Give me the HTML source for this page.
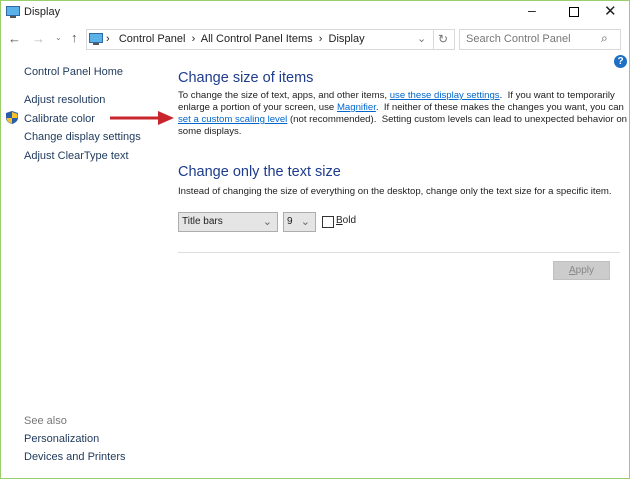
<!DOCTYPE html><html><head><style>
body{margin:0;width:630px;height:479px;overflow:hidden;background:#fff;font-family:"Liberation Sans",sans-serif;font-size:11px;color:#1e1e1e;position:relative}
.win{position:absolute;left:0;top:0;width:628px;height:477px;border:1px solid #9acd6c}
.a{position:absolute;white-space:nowrap}
.l{color:#0066cc;text-decoration:underline}
.side{color:#1e395b}
</style></head><body><div class="win"></div>
<svg class="a" style="left:6px;top:6px" width="14" height="12"><rect x="0.5" y="0.5" width="13" height="9" fill="#5bb2e8" stroke="#2d6aa3"/><rect x="4" y="10" width="6" height="2" fill="#555"/></svg>
<div class="a" style="left:24px;top:6px;font-size:11px">Display</div>
<div class="a" style="left:528px;top:2px;font-size:14px">–</div>
<div class="a" style="left:569px;top:7px;width:8px;height:8px;border:1px solid #000"></div>
<div class="a" style="left:604px;top:2px;font-size:15px">✕</div>
<div class="a" style="left:8px;top:31px;font-size:13px;color:#555">←</div>
<div class="a" style="left:32px;top:31px;font-size:13px;color:#bbb">→</div>
<div class="a" style="left:55px;top:33px;font-size:8px;color:#777">⌄</div>
<div class="a" style="left:71px;top:30px;font-size:13px;color:#555">↑</div>
<div class="a" style="left:86px;top:29px;width:367px;height:19px;border:1px solid #d9d9d9"></div>
<svg class="a" style="left:89px;top:33px" width="14" height="12"><rect x="0.5" y="0.5" width="13" height="9" fill="#5bb2e8" stroke="#2d6aa3"/><rect x="4" y="10" width="6" height="2" fill="#555"/></svg>
<div class="a" style="left:106px;top:33px">›&nbsp;&nbsp; Control Panel &nbsp;›&nbsp; All Control Panel Items &nbsp;›&nbsp; Display</div>
<div class="a" style="left:417px;top:32px;color:#777">⌄</div>
<div class="a" style="left:433px;top:30px;width:1px;height:19px;background:#d9d9d9"></div>
<div class="a" style="left:438px;top:32px;color:#777;font-size:12px">↻</div>
<div class="a" style="left:459px;top:29px;width:160px;height:19px;border:1px solid #d9d9d9"></div>
<div class="a" style="left:466px;top:33px;color:#777">Search Control Panel</div>
<div class="a" style="left:601px;top:31px;color:#555;font-size:12px">⌕</div>
<div class="a" style="left:614px;top:55px;width:13px;height:13px;border-radius:50%;background:#1c6fc4;color:#fff;font-weight:bold;font-size:10px;text-align:center;line-height:13px">?</div>
<div class="a side" style="left:24px;top:66px">Control Panel Home</div>
<div class="a side" style="left:24px;top:94px">Adjust resolution</div>
<svg class="a" style="left:6px;top:111px" width="12" height="13"><path d="M6 0L12 2V7C12 10 9 12 6 13C3 12 0 10 0 7V2Z" fill="#2a5ea8"/><path d="M6 1V7H11.5V3L6 1ZM0.6 7H6V12.5C3 11.5 0.6 10 0.6 7Z" fill="#f5c131"/></svg>
<div class="a side" style="left:24px;top:113px">Calibrate color</div>
<div class="a side" style="left:24px;top:131px">Change display settings</div>
<div class="a side" style="left:24px;top:150px">Adjust ClearType text</div>
<svg class="a" style="left:108px;top:111px" width="66" height="14"><rect x="2" y="5.5" width="52" height="3" fill="#c8262c"/><path d="M50 0L66 7L50 14Z" fill="#c8262c"/></svg>
<div class="a" style="left:24px;top:415px;color:#777">See also</div>
<div class="a side" style="left:24px;top:433px">Personalization</div>
<div class="a side" style="left:24px;top:451px">Devices and Printers</div>
<div class="a" style="left:178px;top:70px;font-size:14.5px;color:#1e3c8c">Change size of items</div>
<div class="a" style="left:178px;top:90px;line-height:12px;font-size:9.6px">To change the size of text, apps, and other items, <span class="l">use these display settings</span>.&nbsp; If you want to temporarily<br>enlarge a portion of your screen, use <span class="l">Magnifier</span>.&nbsp; If neither of these makes the changes you want, you can<br><span class="l">set a custom scaling level</span> (not recommended).&nbsp; Setting custom levels can lead to unexpected behavior on<br>some displays.</div>
<div class="a" style="left:178px;top:164px;font-size:14.5px;color:#1e3c8c">Change only the text size</div>
<div class="a" style="left:178px;top:186px;font-size:9.6px">Instead of changing the size of everything on the desktop, change only the text size for a specific item.</div>
<div class="a" style="left:178px;top:212px;width:98px;height:18px;background:#e5e5e5;border:1px solid #adadad"><span style="position:absolute;left:3px;top:3px;font-size:10px">Title bars</span><span style="position:absolute;right:5px;top:2px;color:#666">⌄</span></div>
<div class="a" style="left:283px;top:212px;width:31px;height:18px;background:#e5e5e5;border:1px solid #adadad"><span style="position:absolute;left:3px;top:3px;font-size:10px">9</span><span style="position:absolute;right:5px;top:2px;color:#666">⌄</span></div>
<div class="a" style="left:322px;top:216px;width:10px;height:10px;border:1px solid #333;background:#fff"></div>
<div class="a" style="left:336px;top:215px;font-size:10px"><u>B</u>old</div>
<div class="a" style="left:178px;top:252px;width:442px;height:1px;background:#ddd"></div>
<div class="a" style="left:553px;top:261px;width:55px;height:17px;background:#ccc;border:1px solid #bfbfbf;color:#888;text-align:center;line-height:17px;font-size:10px"><u>A</u>pply</div>
</body></html>
